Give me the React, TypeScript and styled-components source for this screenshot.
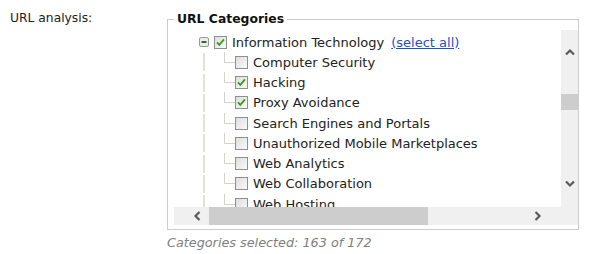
import styled, { createGlobalStyle } from 'styled-components';

const GlobalStyle = createGlobalStyle`
  html, body {
    margin: 0;
    padding: 0;
    background: #fff;
  }
  body {
    font-family: 'DejaVu Sans', Verdana, sans-serif;
    font-size: 13px;
    color: #222;
  }
`;

const FormRow = styled.div`
  display: flex;
  padding-left: 10px;
`;

const FieldLabel = styled.div`
  width: 157px;
  flex-shrink: 0;
  padding-top: 11px;
  font-size: 12.3px;
  line-height: 15px;
`;

const FieldColumn = styled.div`
  display: flex;
  flex-direction: column;
  padding-top: 11px;
`;

const Fieldset = styled.fieldset`
  box-sizing: border-box;
  width: 412px;
  margin: 0;
  padding: 3px 0 4px 6px;
  border: 1px solid #cccccc;
`;

const Legend = styled.legend`
  padding: 0 3px;
  font-weight: bold;
  font-size: 12.4px;
  line-height: 16px;
  color: #111;
`;

const ScrollFrame = styled.div`
  display: grid;
  grid-template-columns: 1fr 17px;
  grid-template-rows: 177px 18px;
  width: 100%;
`;

const Viewport = styled.div`
  overflow: hidden;
  background: #fff;
  padding-top: 2px;
`;

const TreeRow = styled.div<{ $level: number }>`
  display: flex;
  align-items: center;
  height: 20.25px;
  padding-left: ${p => (p.$level === 0 ? 25 : 29)}px;
  white-space: nowrap;
`;

const Guide = styled.span`
  width: 2px;
  height: 18px;
  background: #e4e1da;
  margin-right: 19px;
  flex-shrink: 0;
`;

const Elbow = styled.span`
  width: 10px;
  height: 10px;
  margin-top: -10px;
  border-left: 1px solid #d6d3cc;
  border-bottom: 1px solid #d6d3cc;
  flex-shrink: 0;
`;

const Toggle = styled.svg`
  width: 10px;
  height: 10px;
  margin-right: 5px;
  flex-shrink: 0;
`;

const Box = styled.svg`
  width: 13px;
  height: 13px;
  margin-right: 5px;
  flex-shrink: 0;
`;

const NodeText = styled.span`
  line-height: 15px;
`;

const SelectAll = styled.a`
  margin-left: 7px;
  color: #1f4fcc;
  text-decoration: underline;
  cursor: pointer;
`;

const VBar = styled.div`
  background: #f0f0f0;
  display: flex;
  flex-direction: column;
`;

const HBar = styled.div`
  background: #f0f0f0;
  display: flex;
`;

const Corner = styled.div`
  background: #f0f0f0;
`;

const ArrowButton = styled.div<{ $size: number; $vertical: boolean; $inset?: number }>`
  box-sizing: border-box;
  display: flex;
  align-items: center;
  justify-content: center;
  flex-shrink: 0;
  ${p => (p.$vertical ? `height: ${p.$size}px;` : `width: ${p.$size}px;`)}
  padding-left: ${p => p.$inset ?? 0}px;
`;

const Track = styled.div`
  flex: 1;
  position: relative;
`;

const Thumb = styled.div`
  position: absolute;
  background: #cdcdcd;
`;

const Footer = styled.div`
  padding-top: 5px;
  font-style: italic;
  font-size: 12.8px;
  color: #808080;
  line-height: 15px;
`;

function Chevron({ dir }: { dir: 'up' | 'down' | 'left' | 'right' }) {
  const rot = { up: 0, right: 90, down: 180, left: 270 }[dir];
  return (
    <svg width="10" height="10" viewBox="0 0 10 10">
      <path
        d="M1 7.5 L5 3.5 L9 7.5"
        fill="none"
        stroke="#5a5a5a"
        strokeWidth="2.2"
        transform={`rotate(${rot} 5 5)`}
      />
    </svg>
  );
}

function Checkbox({ checked }: { checked: boolean }) {
  return (
    <Box viewBox="0 0 13 13">
      <defs>
        <linearGradient id="cbg" x1="0" y1="0" x2="1" y2="1">
          <stop offset="0" stopColor="#dcdcdc" />
          <stop offset="1" stopColor="#fbfbfb" />
        </linearGradient>
      </defs>
      <rect x="0.5" y="0.5" width="12" height="12" fill="url(#cbg)" stroke="#8e8f8f" />
      {checked && (
        <path d="M3 6.3 L5.3 8.8 L10 3.3" fill="none" stroke="#3e9a1e" strokeWidth="1.8" />
      )}
    </Box>
  );
}

function MinusToggle() {
  return (
    <Toggle viewBox="0 0 10 10">
      <rect x="0.5" y="0.5" width="9" height="9" rx="1.5" fill="#e9efe7" stroke="#8fa08c" />
      <rect x="2.5" y="4" width="5" height="2" fill="#50584f" />
    </Toggle>
  );
}

const children = [
  { label: 'Computer Security', checked: false },
  { label: 'Hacking', checked: true },
  { label: 'Proxy Avoidance', checked: true },
  { label: 'Search Engines and Portals', checked: false },
  { label: 'Unauthorized Mobile Marketplaces', checked: false },
  { label: 'Web Analytics', checked: false },
  { label: 'Web Collaboration', checked: false },
  { label: 'Web Hosting', checked: false },
];

const scroll = {
  vTop: 20,
  vSize: 16,
  hLeft: 0,
  hSize: 219,
};

export default function App() {
  return (
    <>
      <GlobalStyle />
      <FormRow>
        <FieldLabel>URL analysis:</FieldLabel>
        <FieldColumn>
          <Fieldset>
            <Legend>URL Categories</Legend>
            <ScrollFrame>
              <Viewport>
                <TreeRow $level={0}>
                  <MinusToggle />
                  <Checkbox checked />
                  <NodeText>Information Technology</NodeText>
                  <SelectAll>(select all)</SelectAll>
                </TreeRow>
                {children.map(c => (
                  <TreeRow key={c.label} $level={1}>
                    <Guide />
                    <Elbow />
                    <Checkbox checked={c.checked} />
                    <NodeText>{c.label}</NodeText>
                  </TreeRow>
                ))}
              </Viewport>
              <VBar>
                <ArrowButton $size={44} $vertical>
                  <Chevron dir="up" />
                </ArrowButton>
                <Track>
                  <Thumb style={{ top: scroll.vTop, height: scroll.vSize, left: 0, right: 0 }} />
                </Track>
                <ArrowButton $size={46} $vertical>
                  <Chevron dir="down" />
                </ArrowButton>
              </VBar>
              <HBar>
                <ArrowButton $size={35} $vertical={false} $inset={10}>
                  <Chevron dir="left" />
                </ArrowButton>
                <Track>
                  <Thumb style={{ left: scroll.hLeft, width: scroll.hSize, top: 0, bottom: 0 }} />
                </Track>
                <ArrowButton $size={46} $vertical={false}>
                  <Chevron dir="right" />
                </ArrowButton>
              </HBar>
              <Corner />
            </ScrollFrame>
          </Fieldset>
          <Footer>Categories selected: 163 of 172</Footer>
        </FieldColumn>
      </FormRow>
    </>
  );
}
